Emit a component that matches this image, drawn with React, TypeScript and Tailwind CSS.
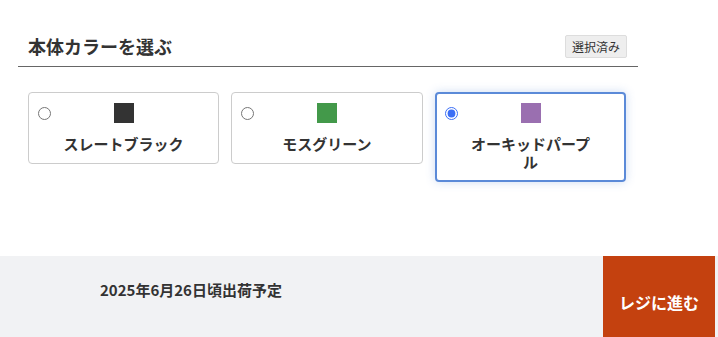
const colors = [
  { name: 'スレートブラック', swatch: 'bg-[#333333]', selected: false },
  { name: 'モスグリーン', swatch: 'bg-[#43994a]', selected: false },
  { name: 'オーキッドパープル', swatch: 'bg-[#9a6fb0]', selected: true },
];

export default function App() {
  return (
    <div className="flex min-h-screen flex-col bg-white font-['Noto_Sans_CJK_JP',sans-serif] text-[#333]">
      <section className="ml-[18px] w-[620px] pt-[32px]">
        <div className="flex items-center justify-between border-b border-[#666] px-[10px] pb-[6px]">
          <h2 className="text-[18px] font-bold leading-[28px]">本体カラーを選ぶ</h2>
          <span className="mr-px rounded-[2px] border border-[#ddd] bg-[#eee] px-[6px] text-[12px] leading-[21px] text-[#333]">
            選択済み
          </span>
        </div>
        <div className="mt-[25px] grid grid-cols-[191px_192px_191px] items-start gap-[12px] px-[10px]">
          {colors.map((c) => (
            <label
              key={c.name}
              className={
                c.selected
                  ? 'relative flex flex-col items-center rounded-[4px] border-2 border-[#5b8ad8] px-[31px] pt-[9px] pb-[9px] shadow-[0_0_10px_rgba(91,138,216,0.3)]'
                  : 'relative flex flex-col items-center rounded-[4px] border border-[#ccc] px-[32px] pt-[10px] pb-[10px]'
              }
            >
              <input
                type="radio"
                name="color"
                defaultChecked={c.selected}
                className={
                  c.selected
                    ? 'absolute top-[13px] left-[8px] m-0 h-[13px] w-[13px] accent-[#3b6ef5]'
                    : 'absolute top-[14px] left-[9px] m-0 h-[13px] w-[13px]'
                }
              />
              <span className={`block h-[20px] w-[20px] ${c.swatch}`} />
              <span className="mt-[12px] text-center text-[15px] font-bold leading-[18px]">{c.name}</span>
            </label>
          ))}
        </div>
      </section>
      <footer className="mt-auto flex h-[81px] bg-[#f1f2f4] pr-[3px]">
        <div className="flex-1 pt-[23px] pl-[100px] text-[15px] font-bold leading-[22px] text-[#333]">
          2025年6月26日頃出荷予定
        </div>
        <button
          type="button"
          className="h-[92px] w-[112px] self-start bg-[#c4410f] text-[16px] font-bold text-white"
        >
          レジに進む
        </button>
      </footer>
    </div>
  );
}
